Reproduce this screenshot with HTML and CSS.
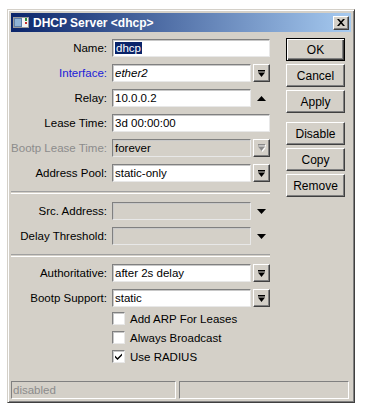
FILE: index.html
```html
<!DOCTYPE html>
<html>
<head>
<meta charset="utf-8">
<link rel="stylesheet" href="styles.css">
</head>
<body>
<div class="window">
  <div class="titlebar">
    <svg class="ticon" width="16" height="11" viewBox="0 0 16 11">
      <rect x="0.5" y="0.5" width="15" height="10" fill="#f4f4f4" stroke="#9a9a9a"/>
      <rect x="1" y="1" width="8" height="9" fill="#5f7fa8"/>
      <rect x="2" y="2" width="6" height="7" fill="#8fb3d6"/>
      <rect x="12" y="1" width="2" height="3" fill="#2e8b3a"/>
      <rect x="12" y="5" width="2" height="2" fill="#c8302a"/>
    </svg>
    <span class="title">DHCP Server &lt;dhcp&gt;</span>
    <div class="close">
      <svg width="8" height="7" viewBox="0 0 8 7"><path d="M0 0h2l2 2.2L6 0h2L5 3.5 8 7H6L4 4.8 2 7H0l3-3.5z" fill="#000"/></svg>
    </div>
  </div>
  <div class="body">
    <div class="form">
      <div class="row">
        <label class="lbl">Name:</label>
        <div class="field"><span class="sel">dhcp</span></div>
      </div>
      <div class="row">
        <label class="lbl blue">Interface:</label>
        <div class="field short"><i>ether2</i></div>
        <div class="ddbtn"><svg width="7" height="7" viewBox="0 0 7 7"><rect x="0" y="0" width="7" height="1.5" fill="#000"/><path d="M0 2.5h7L3.5 7z" fill="#000"/></svg></div>
      </div>
      <div class="row">
        <label class="lbl">Relay:</label>
        <div class="field short">10.0.0.2</div>
        <div class="tri"><svg width="9" height="5" viewBox="0 0 9 5"><path d="M0 5h9L4.5 0z" fill="#000"/></svg></div>
      </div>
      <div class="row">
        <label class="lbl">Lease Time:</label>
        <div class="field">3d 00:00:00</div>
      </div>
      <div class="row">
        <label class="lbl gray">Bootp Lease Time:</label>
        <div class="field short disabled">forever</div>
        <div class="ddbtn"><svg width="8" height="8" viewBox="0 0 8 8"><rect x="1" y="1" width="7" height="1.5" fill="#fff"/><path d="M1 3.5h7L4.5 8z" fill="#fff"/><rect x="0" y="0" width="7" height="1.5" fill="#8a8a8a"/><path d="M0 2.5h7L3.5 7z" fill="#8a8a8a"/></svg></div>
      </div>
      <div class="row">
        <label class="lbl">Address Pool:</label>
        <div class="field short">static-only</div>
        <div class="ddbtn"><svg width="7" height="7" viewBox="0 0 7 7"><rect x="0" y="0" width="7" height="1.5" fill="#000"/><path d="M0 2.5h7L3.5 7z" fill="#000"/></svg></div>
      </div>
      <div class="sep"></div>
      <div class="row first">
        <label class="lbl">Src. Address:</label>
        <div class="field short disabled"></div>
        <div class="tri"><svg width="9" height="5" viewBox="0 0 9 5"><path d="M0 0h9L4.5 5z" fill="#000"/></svg></div>
      </div>
      <div class="row">
        <label class="lbl">Delay Threshold:</label>
        <div class="field short disabled"></div>
        <div class="tri"><svg width="9" height="5" viewBox="0 0 9 5"><path d="M0 0h9L4.5 5z" fill="#000"/></svg></div>
      </div>
      <div class="sep"></div>
      <div class="row first2">
        <label class="lbl">Authoritative:</label>
        <div class="field short">after 2s delay</div>
        <div class="ddbtn"><svg width="7" height="7" viewBox="0 0 7 7"><rect x="0" y="0" width="7" height="1.5" fill="#000"/><path d="M0 2.5h7L3.5 7z" fill="#000"/></svg></div>
      </div>
      <div class="row">
        <label class="lbl">Bootp Support:</label>
        <div class="field short">static</div>
        <div class="ddbtn"><svg width="7" height="7" viewBox="0 0 7 7"><rect x="0" y="0" width="7" height="1.5" fill="#000"/><path d="M0 2.5h7L3.5 7z" fill="#000"/></svg></div>
      </div>
      <div class="checks">
        <div class="check"><span class="box"></span><span>Add ARP For Leases</span></div>
        <div class="check"><span class="box"></span><span>Always Broadcast</span></div>
        <div class="check"><span class="box"><svg width="9" height="9" viewBox="0 0 9 9"><path d="M1 3.5l2.5 2.5L8 1.5v2L3.5 8 1 5.5z" fill="#000"/></svg></span><span>Use RADIUS</span></div>
      </div>
    </div>
    <div class="buttons">
      <div class="btn default">OK</div>
      <div class="btn">Cancel</div>
      <div class="btn">Apply</div>
      <div class="btn spaced">Disable</div>
      <div class="btn">Copy</div>
      <div class="btn">Remove</div>
    </div>
  </div>
  <div class="status">
    <div class="panel left">disabled</div>
    <div class="panel right"></div>
  </div>
</div>
</body>
</html>
```
FILE: styles.css
```css
html, body {
  margin: 0;
  padding: 0;
  background: #ffffff;
}
body {
  font-family: "Liberation Sans", Arial, sans-serif;
  font-size: 11.5px;
  color: #000;
}
.window {
  margin: 9px 0 0 7px;
  width: 348px;
  height: 394px;
  box-sizing: border-box;
  background: #d4d0c8;
  border: 1px solid;
  border-color: #d4d0c8 #404040 #404040 #d4d0c8;
  box-shadow: inset 1px 1px 0 #fff, inset -1px -1px 0 #808080;
  padding: 3px;
  display: flex;
  flex-direction: column;
}
.titlebar {
  height: 19px;
  display: flex;
  align-items: center;
  background: linear-gradient(to right, #0a246a, #a6caf0);
}
.ticon {
  margin-left: 2px;
  flex: none;
}
.title {
  margin-left: 4px;
  color: #fff;
  font-weight: bold;
  font-size: 12px;
}
.close {
  margin-left: auto;
  margin-right: 2px;
  width: 16px;
  height: 14px;
  box-sizing: border-box;
  background: #d4d0c8;
  border: 1px solid;
  border-color: #fff #404040 #404040 #fff;
  box-shadow: inset -1px -1px 0 #808080;
  display: flex;
  align-items: center;
  justify-content: center;
}
.body {
  height: 349px;
  display: flex;
}
.form {
  width: 259px;
  padding-top: 7px;
  display: flex;
  flex-direction: column;
}
.row {
  display: flex;
  height: 18px;
  margin-top: 7px;
  align-items: center;
}
.row:first-child { margin-top: 0; }
.row.first { margin-top: 8px; }
.row.first2 { margin-top: 7px; }
.lbl {
  width: 96px;
  text-align: right;
  flex: none;
}
.blue { color: #2020d8; }
.gray { color: #8c8c8c; }
.field {
  margin-left: 5px;
  width: 158px;
  height: 18px;
  box-sizing: border-box;
  background: #fff;
  border: 1px solid;
  border-color: #808080 #e8e8e8 #e8e8e8 #808080;
  box-shadow: inset 1px 1px 0 #c8c8c8;
  padding-left: 2px;
  line-height: 16px;
  white-space: nowrap;
  overflow: hidden;
}
.field.short { width: 139px; }
.field.disabled { background: #d4d0c8; }
.sel {
  background: #0a246a;
  color: #fff;
  padding: 0 1px;
}
.ddbtn {
  margin-left: 2px;
  width: 17px;
  height: 18px;
  box-sizing: border-box;
  background: #d4d0c8;
  border: 1px solid;
  border-color: #fff #404040 #404040 #fff;
  box-shadow: inset -1px -1px 0 #808080;
  display: flex;
  align-items: center;
  justify-content: center;
}
.tri {
  margin-left: 2px;
  width: 17px;
  height: 18px;
  display: flex;
  align-items: center;
  justify-content: center;
}
.sep {
  margin-top: 9px;
  height: 1px;
  border-top: 1px solid #a0a0a0;
  border-bottom: 1px solid #fff;
}
.checks {
  margin-top: 2px;
  margin-left: 101px;
  display: flex;
  flex-direction: column;
}
.check {
  height: 19px;
  display: flex;
  align-items: center;
}
.box {
  width: 13px;
  height: 13px;
  box-sizing: border-box;
  background: #fff;
  border: 1px solid;
  border-color: #808080 #e8e8e8 #e8e8e8 #808080;
  box-shadow: inset 1px 1px 0 #c8c8c8;
  margin-right: 5px;
  display: flex;
  align-items: center;
  justify-content: center;
  flex: none;
}
.buttons {
  margin-left: 16px;
  width: 59px;
  padding-top: 6px;
  display: flex;
  flex-direction: column;
}
.btn {
  height: 23px;
  box-sizing: border-box;
  margin-bottom: 3px;
  border: 1px solid;
  border-color: #fff #404040 #404040 #fff;
  box-shadow: inset -1px -1px 0 #808080;
  display: flex;
  align-items: center;
  justify-content: center;
  font-size: 12px;
}
.btn.default {
  border-color: #000;
  box-shadow: inset 1px 1px 0 #fff, inset -1px -1px 0 #404040, inset -2px -2px 0 #808080;
}
.btn.spaced { margin-top: 6px; }
.status {
  height: 18px;
  display: flex;
}
.panel {
  height: 18px;
  box-sizing: border-box;
  border: 1px solid;
  border-color: #808080 #fff #fff #808080;
  color: #8c8c8c;
  padding-left: 1px;
  line-height: 16px;
}
.panel.left { width: 165px; }
.panel.right { width: 170px; margin-left: 3px; }
```
